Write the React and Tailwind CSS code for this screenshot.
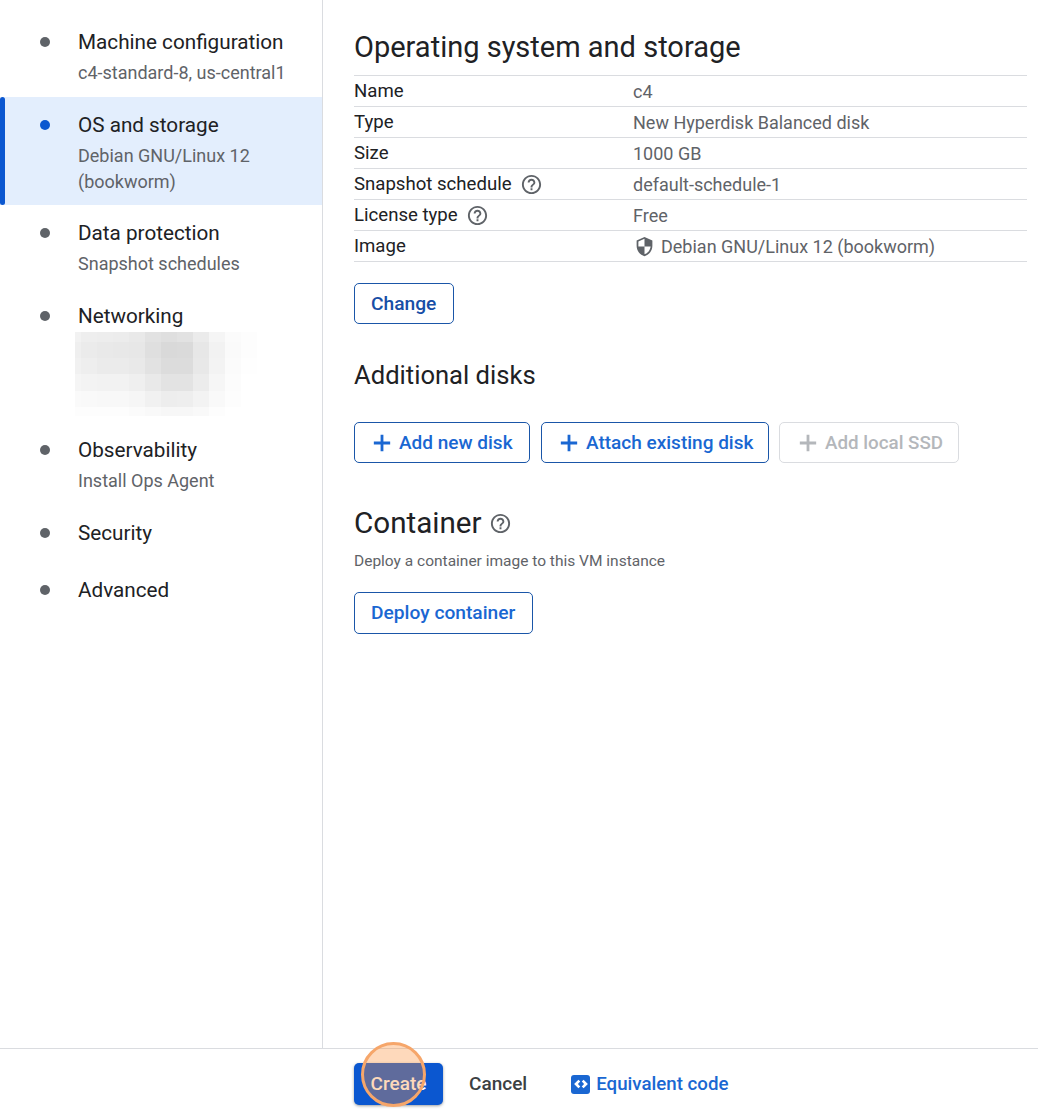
import { Fragment } from 'react';

const helpPath =
  'M11 18h2v-2h-2v2zm1-16C6.48 2 2 6.48 2 12s4.48 10 10 10 10-4.48 10-10S17.52 2 12 2zm0 18c-4.41 0-8-3.59-8-8s3.59-8 8-8 8 3.59 8 8-3.59 8-8 8zm0-14c-2.21 0-4 1.79-4 4h2c0-1.1.9-2 2-2s2 .9 2 2c0 2-3 1.75-3 5h2c0-2.25 3-2.5 3-5 0-2.21-1.79-4-4-4z';

function HelpIcon({ className }) {
  return (
    <svg viewBox="0 0 24 24" className={className} fill="currentColor">
      <path d={helpPath} />
    </svg>
  );
}

function PlusIcon() {
  return (
    <svg viewBox="0 0 24 24" className="mr-[3px] h-[28px] w-[28px] shrink-0" fill="currentColor">
      <path d="M19 13.2h-5.8V19h-2.4v-5.8H5v-2.4h5.8V5h2.4v5.8H19v2.4z" />
    </svg>
  );
}

// Redacted block under Networking, one row of shades per mosaic row
const mosaic = [
  ['#f2f2f2', '#eeeeee', '#ededed', '#ececec', '#e9e9e9', '#e2e2e2', '#dfdfdf', '#e2e2e2', '#ebebeb', '#f5f5f5', '#fbfbfb', '#fdfdfd'],
  ['#efefef', '#ebebeb', '#e9e9e9', '#e8e8e8', '#e7e7e7', '#dfdfdf', '#d9d9d9', '#dadada', '#e7e7e7', '#f2f2f2', '#fafafa', '#fdfdfd'],
  ['#f1f1f1', '#eeeeee', '#ebebeb', '#ebebeb', '#e9e9e9', '#e2e2e2', '#dcdcdc', '#dcdcdc', '#e8e8e8', '#f3f3f3', '#fbfbfb', '#fefefe'],
  ['#f5f5f5', '#f3f3f3', '#f2f2f2', '#f2f2f2', '#efefef', '#e9e9e9', '#e3e3e3', '#e3e3e3', '#ececec', '#f6f6f6', '#fcfcfc', '#ffffff'],
  ['#fafafa', '#f9f9f9', '#f8f8f8', '#f8f8f8', '#f6f6f6', '#f1f1f1', '#ededed', '#eeeeee', '#f3f3f3', '#f9f9f9', '#fdfdfd', '#ffffff'],
  ['#fdfdfd', '#fdfdfd', '#fdfdfd', '#fdfdfd', '#fbfbfb', '#f9f9f9', '#f7f7f7', '#f7f7f7', '#f9f9f9', '#fdfdfd', '#ffffff', '#ffffff'],
];

function Mosaic() {
  return (
    <div className="-ml-[3px] mt-[3px] mb-[6px] grid grid-cols-[6px_repeat(11,16px)] grid-rows-[10px_16px_16px_17px_16px_9px]">
      {mosaic.map((row, r) => (
        <Fragment key={r}>
          {row.map((shade, c) => (
            <div key={c} style={{ backgroundColor: shade }} />
          ))}
        </Fragment>
      ))}
    </div>
  );
}

function NavItem({ title, lines = [], active, children, className = '' }) {
  return (
    <div className={`relative flex pl-[40px] pt-[15px] ${active ? 'bg-[#e3eefd]' : ''} ${className}`}>
      {active && <div className="absolute left-0 top-0 bottom-0 w-[5px] rounded-[3px] bg-[#0b57d0]" />}
      <div className={`mt-[8px] h-[10px] w-[10px] shrink-0 rounded-full ${active ? 'bg-[#0b57d0]' : 'bg-[#5f6368]'}`} />
      <div className="ml-[28px] min-w-0">
        <div className="text-[20.7px] leading-[26px] text-[#202124]">{title}</div>
        {lines.length > 0 && (
          <div className="mt-[5px] text-[18px] leading-[26px] text-[#5f6368]">
            {lines.map((l) => (
              <div key={l}>{l}</div>
            ))}
          </div>
        )}
        {children}
      </div>
    </div>
  );
}

function Row({ label, help, children }) {
  return (
    <div className="flex h-[31px] items-center border-b border-[#dadce0] text-[18px]">
      <div className="flex w-[279px] shrink-0 items-center pt-[2px] text-[18.6px] text-[#202124]">
        {label}
        {help && <HelpIcon className="ml-[8px] h-[23px] w-[23px] text-[#5f6368]" />}
      </div>
      <div className="flex items-center text-[#5f6368]">{children}</div>
    </div>
  );
}

function OutlineButton({ children, className = '' }) {
  return (
    <button className={`flex h-[41px] items-center rounded-[5px] border border-[#1a56a8] pt-px font-medium ${className}`}>
      {children}
    </button>
  );
}

export default function App() {
  return (
    <div className="flex h-[1120px] w-[1038px] flex-col overflow-hidden bg-white font-['Roboto',sans-serif]">
      <div className="flex min-h-0 flex-1">
        {/* Left steps */}
        <nav className="w-[323px] shrink-0 border-r border-[#dadce0] pt-[14px]">
          <NavItem title="Machine configuration" lines={['c4-standard-8, us-central1']} className="pb-[11px]" />
          <NavItem title="OS and storage" lines={['Debian GNU/Linux 12', '(bookworm)']} active className="pb-[10px]" />
          <NavItem title="Data protection" lines={['Snapshot schedules']} className="pb-[11px]" />
          <NavItem title="Networking">
            <Mosaic />
          </NavItem>
          <NavItem title="Observability" lines={['Install Ops Agent']} className="pb-[11px]" />
          <NavItem title="Security" className="pb-[16px]" />
          <NavItem title="Advanced" />
        </nav>

        {/* Main panel */}
        <main className="min-w-0 flex-1 pl-[31px] pr-[11px] pt-[28px]">
          <h1 className="text-[29px] leading-[38px] text-[#202124]">Operating system and storage</h1>
          <div className="mt-[9px] border-t border-[#dadce0]">
            <Row label="Name">c4</Row>
            <Row label="Type">New Hyperdisk Balanced disk</Row>
            <Row label="Size">1000 GB</Row>
            <Row label="Snapshot schedule" help>default-schedule-1</Row>
            <Row label="License type" help>Free</Row>
            <Row label="Image">
              <svg viewBox="0 0 24 24" className="ml-[1px] mr-[6px] h-[21px] w-[21px]" fill="currentColor">
                <path d="M12 1L3 5v6c0 5.55 3.84 10.74 9 12 5.16-1.26 9-6.45 9-12V5l-9-4zm0 10.99h7c-.53 4.12-3.28 7.79-7 8.94V12H5V6.3l7-3.11v8.8z" />
              </svg>
              Debian GNU/Linux 12 (bookworm)
            </Row>
          </div>

          <OutlineButton className="mt-[21px] pl-[16px] pr-[17px] text-[19.2px] text-[#174ea6]">Change</OutlineButton>

          <h2 className="mt-[34px] text-[25.6px] leading-[34px] text-[#202124]">Additional disks</h2>
          <div className="mt-[30px] flex gap-[11px]">
            <OutlineButton className="w-[176px] pl-[13px] text-[19px] text-[#1a67d2]">
              <PlusIcon />
              Add new disk
            </OutlineButton>
            <OutlineButton className="w-[228px] pl-[13px] text-[19px] text-[#1a67d2]">
              <PlusIcon />
              Attach existing disk
            </OutlineButton>
            <button className="-ml-px flex h-[41px] w-[180px] items-center rounded-[5px] border border-[#dadce0] pl-[14px] pt-px text-[18.8px] font-medium text-[#b4b7bb]">
              <PlusIcon />
              Add local SSD
            </button>
          </div>

          <div className="mt-[43px] flex h-[34px] items-center">
            <h2 className="text-[29.6px] leading-[34px] text-[#202124]">Container</h2>
            <HelpIcon className="ml-[7px] h-[23px] w-[23px] text-[#5f6368]" />
          </div>
          <p className="mt-[10px] text-[15.5px] leading-[22px] text-[#5f6368]">Deploy a container image to this VM instance</p>
          <OutlineButton className="mt-[20px] h-[42px] pl-[16px] pr-[17px] text-[19.2px] text-[#1a67d2]">Deploy container</OutlineButton>
        </main>
      </div>

      {/* Footer actions */}
      <footer className="flex h-[72px] shrink-0 items-start border-t border-[#dadce0] pl-[354px] pt-[14px]">
        <div className="relative">
          <button className="flex h-[42px] w-[89px] items-center justify-center rounded-[5px] bg-[#0b57d0] text-[19px] font-medium text-white shadow-[0_1px_3px_rgba(60,64,67,0.5)]">
            Create
          </button>
          <div className="absolute left-[7px] top-[-21px] h-[65px] w-[65px] rounded-full border-[3px] border-[#f6a66a] bg-[#fb923c]/35" />
        </div>
        <button className="ml-[26px] flex h-[42px] items-center text-[19px] font-medium text-[#3c4043]">Cancel</button>
        <button className="ml-[44px] flex h-[42px] items-center text-[18.7px] font-medium text-[#1a67d2]">
          <span className="mr-[6px] flex h-[19px] w-[19px] items-center justify-center rounded-[3px] bg-[#1a67d2]">
            <svg viewBox="0 0 24 24" className="h-[16px] w-[16px]" fill="none" stroke="white" strokeWidth="4">
              <path d="M9.5 7L4.5 12l5 5M14.5 7l5 5-5 5" />
            </svg>
          </span>
          Equivalent code
        </button>
      </footer>
    </div>
  );
}
